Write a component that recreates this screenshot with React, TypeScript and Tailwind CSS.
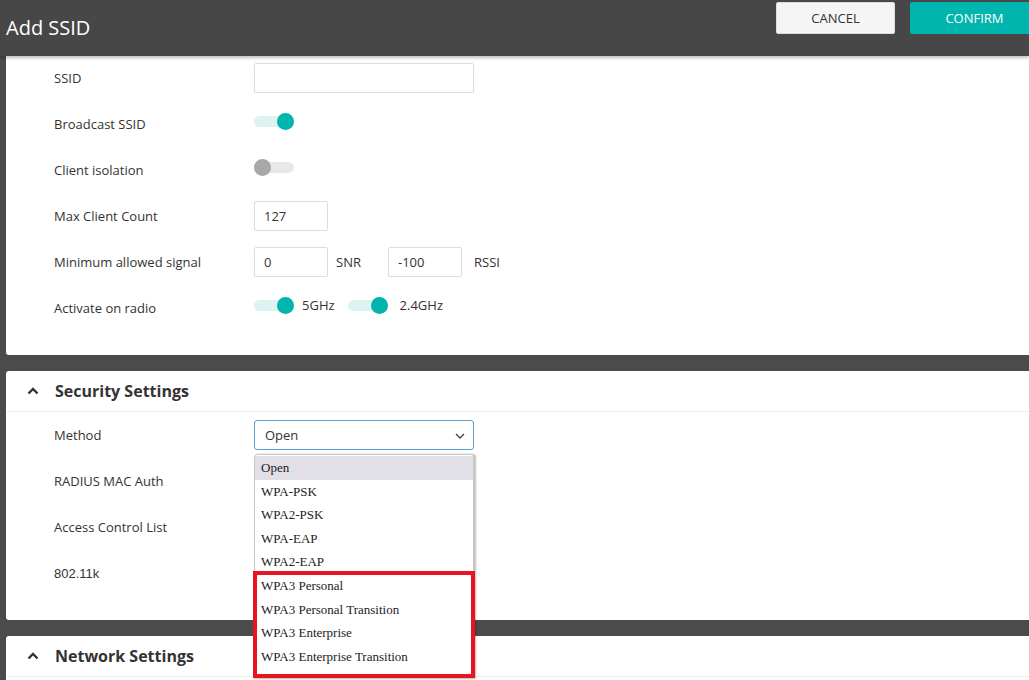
import React from 'react'

const font = { fontFamily: '"Open Sans", "Liberation Sans", sans-serif' }

function Toggle({ on }: { on: boolean }) {
  return (
    <div className="relative w-[40px] h-[17px] flex items-center">
      <div className={`w-[40px] h-[11px] rounded-full ${on ? 'bg-[#dcf3f2]' : 'bg-[#e8e8e8]'}`} />
      <div
        className={`absolute top-0 w-[17px] h-[17px] rounded-full ${on ? 'right-0 bg-[#00b5ad]' : 'left-0 bg-[#a8a8a8]'}`}
      />
    </div>
  )
}

function Row({ label, children, labelFont }: { label: string; children?: React.ReactNode; labelFont?: string }) {
  return (
    <div className="flex items-center h-[46px]">
      <div className={`w-[248px] pl-[48px] pt-[2px] text-[13px] text-[#333] ${labelFont ?? ''}`}>{label}</div>
      <div className="flex items-center">{children}</div>
    </div>
  )
}

function Input({ value, w }: { value?: string; w: string }) {
  return (
    <div className={`${w} h-[30px] border border-[#dcdcdc] rounded-[2px] px-[9px] pt-[1px] flex items-center text-[13px] text-[#333]`}>
      {value}
    </div>
  )
}

function Chevron() {
  return (
    <svg width="12" height="8" viewBox="0 0 12 8" className="mr-[17px] ml-[21px]">
      <path d="M1.5 6.5 L6 2 L10.5 6.5" fill="none" stroke="#333" strokeWidth="2.4" />
    </svg>
  )
}

const methods = [
  'Open',
  'WPA-PSK',
  'WPA2-PSK',
  'WPA-EAP',
  'WPA2-EAP',
  'WPA3 Personal',
  'WPA3 Personal Transition',
  'WPA3 Enterprise',
  'WPA3 Enterprise Transition',
]

export default function App() {
  return (
    <div className="relative w-[1029px] h-[680px] overflow-hidden bg-[#4b4b4b]" style={font}>
      {/* Header */}
      <div className="relative z-10 h-[56px] bg-[#474747] flex items-start justify-between shadow-[0_2px_3px_rgba(0,0,0,0.25)]">
        <div className="pl-[6px] pt-[14px] text-[20px] text-white leading-[28px]">Add SSID</div>
        <div className="flex gap-[15px] pt-[2px] mr-[-10px]">
          <button className="w-[119px] h-[32px] pt-[2px] bg-[#f5f5f5] border border-[#ddd] rounded-[2px] text-[13px] text-[#333]">
            CANCEL
          </button>
          <button className="w-[129px] h-[32px] pt-[2px] bg-[#00b5ad] rounded-[2px] text-[13px] text-white">CONFIRM</button>
        </div>
      </div>

      <div className="pl-[6px] -mt-[1px] flex flex-col gap-[16px]">
        {/* Panel 1 */}
        <div className="bg-white rounded-bl-[3px] pb-[24px]">
          <Row label="SSID">
            <Input w="w-[220px]" />
          </Row>
          <Row label="Broadcast SSID">
            <div className="-mt-[5px]">
              <Toggle on />
            </div>
          </Row>
          <Row label="Client isolation">
            <div className="-mt-[5px]">
              <Toggle on={false} />
            </div>
          </Row>
          <Row label="Max Client Count">
            <Input value="127" w="w-[74px]" />
          </Row>
          <Row label="Minimum allowed signal">
            <Input value="0" w="w-[74px]" />
            <span className="ml-[8px] pt-[1px] w-[52px] text-[13px] text-[#333]">SNR</span>
            <Input value="-100" w="w-[74px]" />
            <span className="ml-[12px] pt-[1px] text-[13px] text-[#333]">RSSI</span>
          </Row>
          <Row label="Activate on radio">
            <div className="flex items-center -mt-[5px]">
              <Toggle on />
              <span className="ml-[8px] text-[13px] text-[#333]">5GHz</span>
              <div className="ml-[13px]">
                <Toggle on />
              </div>
              <span className="ml-[12px] text-[13px] text-[#333]">2.4GHz</span>
            </div>
          </Row>
        </div>

        {/* Panel 2 */}
        <div className="bg-white rounded-l-[3px] pb-[24px]">
          <div className="h-[41px] flex items-center border-b border-[#eeeeee]">
            <Chevron />
            <span className="-ml-[1px] text-[16px] font-bold text-[#333]">Security Settings</span>
          </div>
          <Row label="Method">
            <div className="w-[220px] h-[30px] border border-[#5a9fd0] rounded-[3px] pl-[10px] pr-[8px] pt-[1px] flex items-center justify-between text-[13px] text-[#333]">
              <span>Open</span>
              <svg width="10" height="6" viewBox="0 0 10 6">
                <path d="M1 1 L5 5 L9 1" fill="none" stroke="#444" strokeWidth="1.3" />
              </svg>
            </div>
          </Row>
          <Row label="RADIUS MAC Auth" />
          <Row label="Access Control List" />
          <Row label="802.11k" labelFont="font-['Liberation_Sans']" />
        </div>

        {/* Panel 3 */}
        <div className="bg-white rounded-l-[3px] h-[80px]">
          <div className="h-[41px] flex items-center border-b border-[#eeeeee]">
            <Chevron />
            <span className="-ml-[1px] text-[16px] font-bold text-[#333]">Network Settings</span>
          </div>
        </div>
      </div>

      {/* Dropdown list */}
      <div
        className="absolute left-[254px] top-[454px] w-[220px] bg-white border border-[#c8c8c8] rounded-t-[3px] shadow-[2px_0_2px_rgba(0,0,0,0.25)] pt-[1px]"
        style={{ fontFamily: '"Liberation Serif", "Times New Roman", serif' }}
      >
        {methods.map((m, i) => (
          <div
            key={m}
            className={`h-[23.6px] pl-[6px] flex items-center text-[13px] text-[#222] ${i === 0 ? 'bg-[#e1e0e6]' : ''}`}
          >
            {m}
          </div>
        ))}
        <div className="h-[10px]" />
      </div>

      {/* Red highlight box */}
      <div className="absolute left-[253px] top-[571px] w-[222px] h-[107px] border-[4px] border-[#e8151f]" />
    </div>
  )
}
